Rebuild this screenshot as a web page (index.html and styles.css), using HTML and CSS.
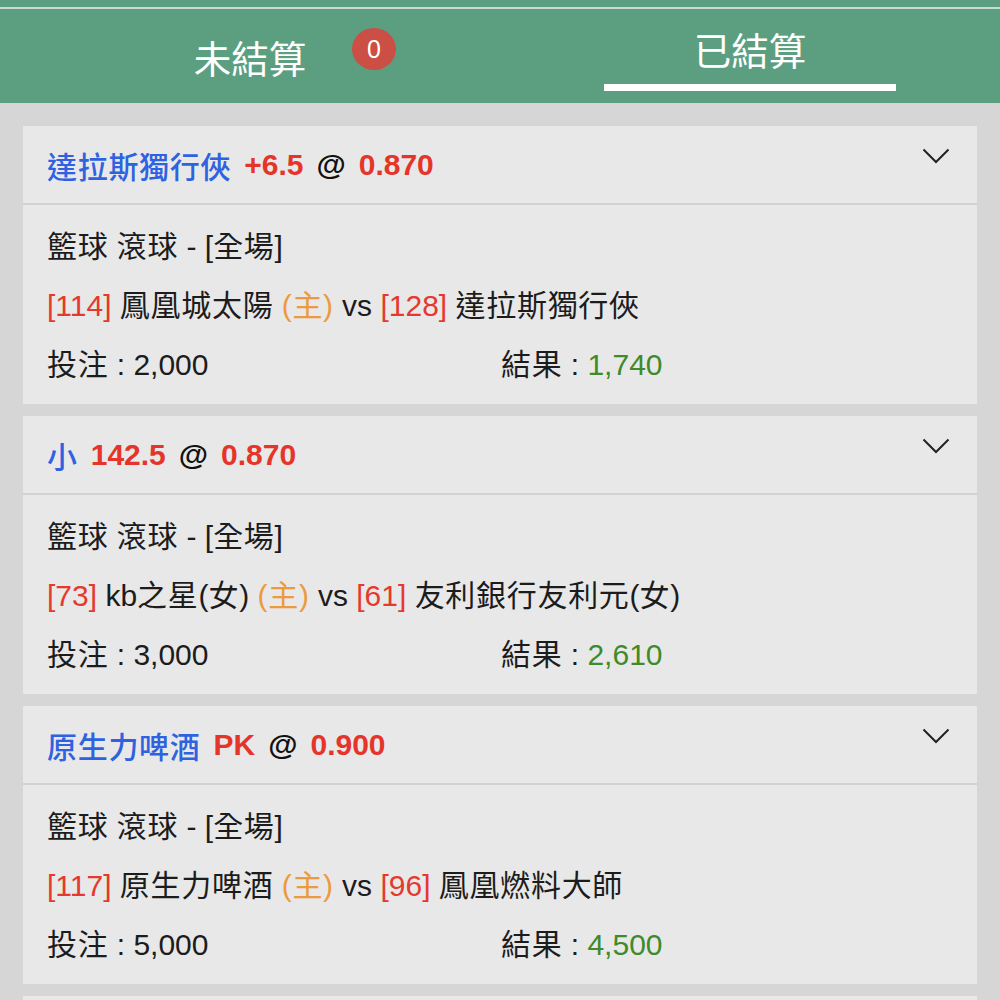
FILE: index.html
```html
<!DOCTYPE html>
<html lang="zh-Hant">
<head>
  <meta charset="UTF-8">
  <title>注單</title>
  <link rel="stylesheet" href="styles.css">
</head>
<body>
  <div class="tabs">
    <div class="tab">
      <span class="tab-label">未結算</span>
      <span class="badge">0</span>
    </div>
    <div class="tab active">
      <span class="tab-label">已結算</span>
    </div>
  </div>

  <div class="list">
    <div class="card">
      <div class="card-head">
        <span class="team">達拉斯獨行俠</span>
        <span class="odds">+6.5</span>
        <span class="at">@</span>
        <span class="odds">0.870</span>
        <svg class="chevron" viewBox="0 0 28 16"><path d="M1.5 1.500 14 14 26.500 1.500"/></svg>
      </div>
      <div class="card-body">
        <div class="row"><span class="zh">籃球</span> <span class="zh">滾球</span> - [<span class="zh">全場</span>]</div>
        <div class="row"><span class="num">[114]</span> <span class="zh">鳳凰城太陽</span> <span class="home">(主)</span> vs <span class="num">[128]</span> <span class="zh">達拉斯獨行俠</span></div>
        <div class="row split">
          <div class="stake"><span class="zh">投注</span> : 2,000</div>
          <div><span class="zh">結果</span> : <span class="win">1,740</span></div>
        </div>
      </div>
    </div>

    <div class="card">
      <div class="card-head">
        <span class="team">小</span>
        <span class="odds">142.5</span>
        <span class="at">@</span>
        <span class="odds">0.870</span>
        <svg class="chevron" viewBox="0 0 28 16"><path d="M1.5 1.500 14 14 26.500 1.500"/></svg>
      </div>
      <div class="card-body">
        <div class="row"><span class="zh">籃球</span> <span class="zh">滾球</span> - [<span class="zh">全場</span>]</div>
        <div class="row"><span class="num">[73]</span> kb<span class="zh">之星</span>(<span class="zh">女</span>) <span class="home">(主)</span> vs <span class="num">[61]</span> <span class="zh">友利銀行友利元</span>(<span class="zh">女</span>)</div>
        <div class="row split">
          <div class="stake"><span class="zh">投注</span> : 3,000</div>
          <div><span class="zh">結果</span> : <span class="win">2,610</span></div>
        </div>
      </div>
    </div>

    <div class="card">
      <div class="card-head">
        <span class="team">原生力啤酒</span>
        <span class="odds">PK</span>
        <span class="at">@</span>
        <span class="odds">0.900</span>
        <svg class="chevron" viewBox="0 0 28 16"><path d="M1.5 1.500 14 14 26.500 1.500"/></svg>
      </div>
      <div class="card-body">
        <div class="row"><span class="zh">籃球</span> <span class="zh">滾球</span> - [<span class="zh">全場</span>]</div>
        <div class="row"><span class="num">[117]</span> <span class="zh">原生力啤酒</span> <span class="home">(主)</span> vs <span class="num">[96]</span> <span class="zh">鳳凰燃料大師</span></div>
        <div class="row split">
          <div class="stake"><span class="zh">投注</span> : 5,000</div>
          <div><span class="zh">結果</span> : <span class="win">4,500</span></div>
        </div>
      </div>
    </div>

    <div class="card"></div>
  </div>
</body>
</html>
```

FILE: styles.css
```css
body {
  margin: 0;
  height: 1000px;
  overflow: hidden;
  background: #d6d6d6;
  font-family: "Liberation Sans", "Noto Sans CJK TC", sans-serif;
  font-size: 30px;
  color: #1c1c1c;
}
.tabs {
  display: flex;
  height: 103px;
  box-sizing: border-box;
  padding-top: 7px;
  background: linear-gradient(#5c9f80 0, #5c9f80 7px, #c9dcd2 7px, #c9dcd2 9px, #5c9f80 9px);
}
.tab {
  position: relative;
  flex: 1;
  display: flex;
  justify-content: center;
  color: #fff;
  font-size: 37.5px;
  padding-top: 27px;
}
.tab-label {
  line-height: 52px;
  height: 52px;
}
.tab.active {
  padding-top: 19px;
}
.tab.active::after {
  content: "";
  position: absolute;
  left: 104px;
  width: 292px;
  bottom: 12px;
  height: 7px;
  background: #fff;
}
.badge {
  position: absolute;
  left: 352px;
  top: 21px;
  width: 44px;
  height: 42px;
  border-radius: 50%;
  background: #cb4f45;
  font-size: 25px;
  line-height: 42px;
  text-align: center;
}
.list {
  display: flex;
  flex-direction: column;
  gap: 12px;
  padding: 23px 23px 0;
}
.card {
  background: #e8e8e8;
  flex-shrink: 0;
}
.card:last-child {
  height: 40px;
}
.card-head {
  position: relative;
  height: 79px;
  box-sizing: border-box;
  padding: 0 24px;
  display: flex;
  align-items: center;
  gap: 13px;
  border-bottom: 2px solid #d2d2d2;
  font-weight: bold;
}
.team {
  color: #2f62e0;
  font-weight: 500;
  letter-spacing: 0.7px;
}
.odds {
  color: #e5352a;
}
.at {
  color: #111;
}
.chevron {
  position: absolute;
  right: 27px;
  top: 22px;
  width: 28px;
  height: 16px;
  fill: none;
  stroke: #222;
  stroke-width: 2;
}
.card-body {
  height: 199px;
  box-sizing: border-box;
  padding: 12px 24px 0;
}
.row {
  height: 59px;
  line-height: 59px;
}
.zh {
  letter-spacing: 0.7px;
}
.split {
  display: flex;
}
.stake {
  width: 454px;
}
.num {
  color: #e5392e;
}
.home {
  color: #ec9a3e;
  letter-spacing: 0.7px;
}
.win {
  color: #3f8a2b;
}
```
